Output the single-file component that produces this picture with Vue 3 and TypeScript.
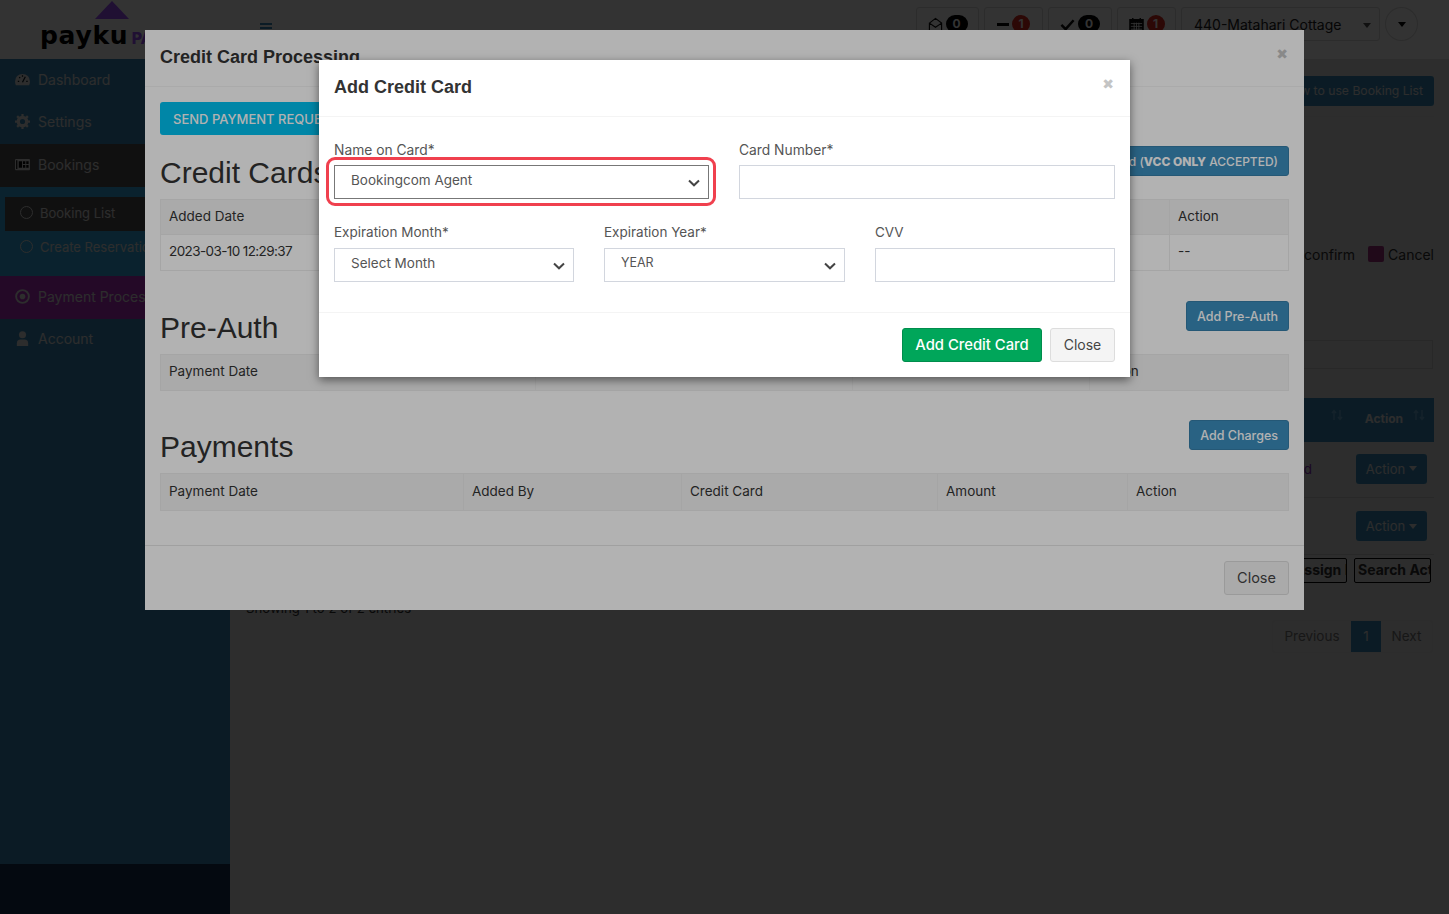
<script setup lang="ts">
const navItems = [
  { label: 'Dashboard', icon: 'dash', cls: '' },
  { label: 'Settings', icon: 'gear', cls: '' },
  { label: 'Bookings', icon: 'card', cls: 'dark' },
]
const months = ['Select Month']
</script>

<template>
  <div class="page">
    <aside class="sidebar">
      <div class="logo">
        <span class="tri"></span>
        <div class="logo-text"><b>payku</b><em>PAY</em></div>
      </div>
      <nav class="nav">
        <a v-for="n in navItems" :key="n.label" class="nav-item" :class="n.cls">
          <svg v-if="n.icon === 'dash'" class="ni" viewBox="0 0 16 16"><path d="M8 2a8 8 0 0 0-8 8c0 1.500.4 2.700 1 4h14c.6-1.300 1-2.500 1-4a8 8 0 0 0-8-8z" fill="currentColor"/><path d="M8 11 11 5M3 10h1.500M12 10h1.500M4.500 5.500l1 1M8 3.500v1.500" stroke="#0c1c26" stroke-width="1.300"/></svg>
          <svg v-else-if="n.icon === 'gear'" class="ni" viewBox="0 0 16 16"><circle cx="8" cy="8" r="4.500" fill="none" stroke="currentColor" stroke-width="3.500"/><path d="M8 0v3M8 13v3M0 8h3M13 8h3M2.300 2.300l2 2M11.700 11.700l2 2M2.300 13.700l2-2M11.700 4.300l2-2" stroke="currentColor" stroke-width="2.400"/></svg>
          <svg v-else class="ni" viewBox="0 0 16 12"><rect width="16" height="12" rx="1" fill="currentColor"/><path d="M1.200 1.500h1.300v9.300H1.200zM4 2.500h3.500v7H4zM8.500 2.500h2.500v3H8.500zM12 2.500h2.500v3H12zM8.500 6.500h2.500v3H8.500zM12 6.500h2.500v3H12z" fill="#111"/></svg>
          <span>{{ n.label }}</span>
        </a>
        <div class="sub">
          <a class="sub-item on"><i></i>Booking List</a>
          <a class="sub-item"><i></i>Create Reservation</a>
        </div>
        <a class="nav-item purple">
          <svg class="ni" viewBox="0 0 16 16"><circle cx="8" cy="8" r="6.800" fill="none" stroke="currentColor" stroke-width="2"/><circle cx="8" cy="8" r="3" fill="currentColor"/></svg>
          <span>Payment Processing</span>
        </a>
        <a class="nav-item">
          <svg class="ni" viewBox="0 0 16 16"><circle cx="8" cy="4" r="3.800" fill="currentColor"/><path d="M2 16v-3a4 4 0 0 1 4-4h4a4 4 0 0 1 4 4v3z" fill="currentColor"/></svg>
          <span>Account</span>
        </a>
      </nav>
      <div class="side-foot"></div>
    </aside>

    <div class="main">
      <header class="topbar">
        <span class="burger"><i></i><i></i><i></i></span>
        <div class="top-right">
          <span class="pill w63">
            <svg class="pi" viewBox="0 0 16 16"><path d="M1.500 6.500 8 1.500l6.500 5v8h-13zM1.500 6.500 8 11l6.500-4.500" fill="none" stroke="#0b0b0b" stroke-width="1.200"/></svg>
            <b class="cnt">0</b>
          </span>
          <span class="pill w59">
            <span class="minus"></span>
            <b class="cnt red">1</b>
          </span>
          <span class="pill w64">
            <svg class="pi" viewBox="0 0 16 16"><path d="M1.500 8.500 6 13l8.500-9.500" fill="none" stroke="#0b0b0b" stroke-width="2.600"/></svg>
            <b class="cnt">0</b>
          </span>
          <span class="pill w59">
            <svg class="pi" viewBox="0 0 16 16"><path d="M1 3h14v12H1zM4 1v3M12 1v3" fill="#0b0b0b" stroke="#0b0b0b" stroke-width="1.500"/><path d="M2 7h12M2 10h12M2 13h12M5.500 6v8M8 6v8M10.500 6v8" stroke="#fff" stroke-width=".9"/></svg>
            <b class="cnt red">1</b>
          </span>
          <span class="hotel">440-Matahari Cottage<i class="caret"></i></span>
          <span class="round"><i class="caret dark"></i></span>
        </div>
      </header>

      <section class="content">
        <div class="how-row"><a class="btn-bg">How to use Booking List</a></div>
        <div class="legend">
          <span>confirm</span><i class="sq"></i><span>Cancel</span>
        </div>
        <div class="search"></div>
        <div class="thead">
          <svg class="sort s1" viewBox="0 0 12 12"><path d="M3 11V2M1 4l2-2.500L5 4M9 1v9M7 8l2 2.500L11 8" fill="none" stroke="#6db0d8" stroke-width="1.300"/></svg>
          <b>Action</b>
          <svg class="sort" viewBox="0 0 12 12"><path d="M3 11V2M1 4l2-2.500L5 4M9 1v9M7 8l2 2.500L11 8" fill="none" stroke="#6db0d8" stroke-width="1.300"/></svg>
        </div>
        <div class="trow first"><span class="purple-t">Confirmed</span><a class="act">Action<i class="caret"></i></a></div>
        <div class="trow"><span></span><a class="act">Action<i class="caret"></i></a></div>
        <div class="btn-row"><span class="ob assign">Assign Room</span><span class="ob">Search Activity</span></div>
        <div class="show">Showing 1 to 2 of 2 entries</div>
        <div class="pager"><span class="prev">Previous</span><b>1</b><span class="next">Next</span></div>
      </section>
    </div>

    <div class="backdrop first"></div>

    <div class="modal outer">
      <div class="m-head">
        <h4>Credit Card Processing</h4>
        <span class="x">✖</span>
      </div>
      <div class="m-body">
        <div class="first-row">
          <a class="b-info">SEND PAYMENT REQUEST</a>
        </div>
        <div class="sec-row cards-title">
          <h2>Credit Cards</h2>
          <a class="b-blue vcc">Add Credit Card (<b>VCC ONLY</b> ACCEPTED)</a>
        </div>
        <table class="t t-cards">
          <thead>
            <tr><th class="c1">Added Date</th><th>Card</th><th class="c7">Action</th></tr>
          </thead>
          <tbody>
            <tr><td class="stamp">2023-03-10 12:29:37</td><td></td><td>--</td></tr>
          </tbody>
        </table>
        <div class="sec-row pre-title">
          <h2>Pre-Auth</h2>
          <a class="b-blue">Add Pre-Auth</a>
        </div>
        <table class="t">
          <thead>
            <tr><th class="p1">Payment Date</th><th class="p2"></th><th class="p3"></th><th>Action</th></tr>
          </thead>
        </table>
        <div class="sec-row pay-title">
          <h2>Payments</h2>
          <a class="b-blue">Add Charges</a>
        </div>
        <table class="t t-pay">
          <thead>
            <tr><th class="q1">Payment Date</th><th class="q2">Added By</th><th class="q3">Credit Card</th><th class="q4">Amount</th><th>Action</th></tr>
          </thead>
        </table>
      </div>
      <div class="m-foot"><a class="b-def big">Close</a></div>
    </div>

    <div class="backdrop second"></div>

    <div class="modal inner">
      <div class="m-head in">
        <h4>Add Credit Card</h4>
        <span class="x">✖</span>
      </div>
      <div class="in-body">
        <div class="grid two">
          <div class="field">
            <label>Name on Card*</label>
            <div class="ring">
              <div class="ctl sel focus">Bookingcom Agent
                <svg class="chev" viewBox="0 0 12 8"><path d="M1 1.500 6 6.300l5-4.800" fill="none" stroke="#444" stroke-width="2"/></svg>
              </div>
            </div>
          </div>
          <div class="field">
            <label>Card Number*</label>
            <div class="ctl"></div>
          </div>
        </div>
        <div class="grid three">
          <div class="field">
            <label>Expiration Month*</label>
            <div class="ctl sel">{{ months[0] }}
              <svg class="chev" viewBox="0 0 12 8"><path d="M1 1.500 6 6.300l5-4.800" fill="none" stroke="#444" stroke-width="2"/></svg>
            </div>
          </div>
          <div class="field">
            <label>Expiration Year*</label>
            <div class="ctl sel small">YEAR
              <svg class="chev" viewBox="0 0 12 8"><path d="M1 1.500 6 6.300l5-4.800" fill="none" stroke="#444" stroke-width="2"/></svg>
            </div>
          </div>
          <div class="field">
            <label>CVV</label>
            <div class="ctl"></div>
          </div>
        </div>
      </div>
      <div class="in-foot">
        <a class="b-green">Add Credit Card</a>
        <a class="b-def">Close</a>
      </div>
    </div>
  </div>
</template>

<style>
html, body { margin: 0; padding: 0; background: #e1e1e1; }
</style>

<style scoped>
* { box-sizing: border-box; }
.page {
  position: relative;
  display: flex;
  width: 1449px;
  height: 914px;
  overflow: hidden;
  background: #e1e1e1;
  font-family: "Inter", "Liberation Sans", sans-serif;
  font-size: 13.500px;
  color: #333;
}
.sidebar { width: 230px; flex: none; display: flex; flex-direction: column; background: #3c8dbc; }
.logo { height: 59px; background: #fff; position: relative; padding: 1px 0 0 95px; }
.tri { display: block; width: 0; height: 0; border-left: 17px solid transparent; border-right: 17px solid transparent; border-bottom: 18px solid #a050ff; }
.logo-text { position: absolute; left: 40px; top: 20px; display: flex; align-items: baseline; color: #000; font-family: "DejaVu Sans", sans-serif; white-space: nowrap; }
.logo-text b { font-size: 25px; letter-spacing: .7px; line-height: 32px; }
.logo-text em { font-style: normal; font-weight: 700; font-size: 15px; color: #a050ff; margin-left: 3px; }
.nav { flex: 1; }
.nav-item { display: flex; align-items: center; height: 42.500px; padding: 0 0 2px 15px; gap: 8px; color: #e1e1e1; font-size: 14px; white-space: nowrap; }
.nav-item.dark { background: #555; }
.nav-item.purple { background: #b532c8; }
.ni { width: 15px; height: 15px; flex: none; }
.sub { background: #37b0e6; padding: 10px 5px 11.500px; }
.sub-item { display: flex; align-items: center; height: 34px; padding: 0 0 2px 15px; gap: 7px; color: #e1e1e1; font-size: 13px; white-space: nowrap; }
.sub-item.on { background: #555; }
.sub-item i { width: 13px; height: 13px; border-radius: 50%; border: 1.500px solid #e1e1e1; }
.side-foot { height: 50px; background: #193250; }

.main { flex: 1; display: flex; flex-direction: column; min-width: 0; }
.topbar { height: 59px; background: #fff; display: flex; justify-content: space-between; padding: 7px 31px 0 30px; }
.burger { display: flex; flex-direction: column; gap: 2px; padding-top: 16px; }
.burger i { display: block; width: 12px; height: 2px; background: #3c8dbc; }
.top-right { display: flex; gap: 5px; height: 34px; }
.pill { display: flex; align-items: center; justify-content: center; gap: 3px; height: 34px; border: 1px solid #ddd; border-radius: 3px; }
.w63 { width: 63px; }
.w59 { width: 59px; }
.w64 { width: 64px; }
.pi { width: 15px; height: 15px; }
.minus { width: 12px; height: 3px; background: #000; }
.cnt { width: 22px; height: 18px; border-radius: 10px; background: #000; color: #fff; font-size: 12px; text-align: center; line-height: 18px; }
.cnt.red { background: #dd2a20; width: 18px; }
.hotel { display: flex; align-items: center; width: 199px; height: 34px; padding: 0 12px; border: 1px solid #ddd; border-radius: 3px; font-size: 14px; color: #222; position: relative; white-space: nowrap; }
.caret { display: inline-block; width: 0; height: 0; border-left: 4px solid transparent; border-right: 4px solid transparent; border-top: 5px solid #e1e1e1; margin-left: 4px; }
.hotel .caret { position: absolute; right: 8px; top: 15px; border-top-color: #555; }
.round { width: 33px; height: 34px; border-radius: 50%; border: 1px solid #ddd; display: flex; align-items: center; justify-content: center; }
.caret.dark { border-top-color: #000; margin: 0; }

.content { flex: 1; padding: 17px 15px 0 16px; display: flex; flex-direction: column; align-items: stretch; color: #333; }
.how-row { display: flex; justify-content: flex-end; padding-bottom: 10px; border-bottom: 1px solid #ddd; }
.btn-bg { height: 30px; width: 300px; background: #3c8dbc; color: #e1e1e1; border-radius: 3px; display: flex; align-items: center; justify-content: flex-end; padding: 0 11px 1px; font-size: 12.200px; }
.legend { display: flex; justify-content: flex-end; align-items: center; gap: 4px; margin-top: 127px; height: 20px; font-size: 14px; }
.legend span:first-child { margin-right: 9px; }
.sq { width: 16px; height: 16px; border-radius: 2px; background: #a0307f; }
.search { height: 29px; border: 1px solid #ccc; margin: 76px 1px 0 0; }
.thead { position: relative; height: 44px; margin-top: 29px; background: #3c8dbc; color: #e1e1e1; display: flex; justify-content: flex-end; align-items: center; padding: 0 31px 3px 0; font-size: 12px; }
.sort { position: absolute; right: 9px; top: 11px; width: 12px; height: 12px; }
.sort.s1 { right: 91px; }
.trow { height: 57px; display: flex; justify-content: flex-end; align-items: center; gap: 44px; border-bottom: 1px solid #ccc; padding-right: 7px; }
.trow.first { height: 56px; padding-bottom: 2px; }
.act { display: flex; align-items: center; justify-content: center; width: 71px; height: 30px; background: #3c8dbc; border-radius: 3px; color: #e1e1e1; font-size: 13px; }
.purple-t { color: #8a2fb8; }
.btn-row { display: flex; justify-content: flex-end; gap: 7px; padding: 3px 3px 0 0; }
.ob { width: 77px; height: 25px; border: 1px solid #000; border-radius: 2px; font-weight: 700; font-size: 14px; overflow: hidden; white-space: nowrap; padding: 2px 3px; }
.ob.assign { padding-left: 23px; }
.show { margin-top: 17px; font-size: 13.200px; }
.pager { align-self: flex-end; display: flex; height: 33px; margin: 4px 1px 0 0; border: 1px solid #ddd; border-radius: 3px; }
.pager span { line-height: 31px; color: #777; text-align: center; }
.prev { width: 78px; }
.next { width: 51px; }
.pager b { width: 30px; background: #3c8dbc; color: #e1e1e1; text-align: center; line-height: 31px; font-weight: 400; }

.backdrop { position: absolute; inset: 0; background: #000; }
.backdrop.first { opacity: .714; }
.backdrop.second { opacity: .3; }

.modal { position: absolute; background: #fff; overflow: hidden; display: flex; flex-direction: column; }
.modal.outer { left: 145px; top: 30px; width: 1159px; height: 580px; }
.modal.inner { left: 319px; top: 60px; width: 811px; height: 317px; box-shadow: 0 3px 9px rgba(0,0,0,.5); }

.m-head { height: 57px; display: flex; justify-content: space-between; align-items: center; padding: 0 15px; border-bottom: 1px solid #f4f4f4; }
.m-head h4 { margin: 0; font: 700 18px/1.100 "Liberation Sans", sans-serif; color: #333; }
.x { color: #c4c4c4; font-size: 14px; line-height: 14px; font-family: "DejaVu Sans", sans-serif; margin: -8px 1px 0 0; }

.m-body { flex: 1; padding: 15px 15px 0; }
.first-row { height: 33px; }
.b-info { width: 220px; height: 33px; background: #00c0ef; color: #fff; border-radius: 3px; display: flex; align-items: center; padding: 0 13px; font-size: 13px; font-weight: 500; white-space: nowrap; }
h2 { margin: 10px 0 0; font: 400 30px/33px "Liberation Sans", sans-serif; color: #333; }
.sec-row { display: flex; justify-content: space-between; align-items: flex-start; height: 53px; }
.cards-title { margin-top: 11px; }
.pre-title { margin-top: 30px; }
.pay-title { margin-top: 29px; }
.b-blue { height: 30px; background: #3c8dbc; color: #fff; border: 1px solid #367fa9; border-radius: 3px; display: flex; align-items: center; padding: 0 10px; font-size: 12.500px; white-space: pre; font-weight: 500; }
.b-blue.vcc { font-size: 12px; }
.b-blue b { font-weight: 800; }
.t { width: 100%; border-collapse: collapse; table-layout: fixed; font-size: 13.500px; color: #333; }
.t th, .t td { border: 1px solid #ececec; font-weight: 400; text-align: left; padding: 0 8px 3px; height: 36px; }
.t th { background: #f4f4f4; }
.t-cards th { height: 35px; }
.t-pay th { height: 37px; }
.stamp { letter-spacing: -.6px; }
.c1 { width: 540px; }
.c7 { width: 119px; }
.p1 { width: 375px; }
.p2 { width: 317px; }
.p3 { width: 237px; }
.q1 { width: 303px; }
.q2 { width: 218px; }
.q3 { width: 256px; }
.q4 { width: 190px; }
.m-foot { height: 65px; border-top: 1px solid #e5e5e5; display: flex; justify-content: flex-end; align-items: center; padding: 0 15px; }
.b-def { height: 34px; width: 65px; justify-content: center; background: #f4f4f4; border: 1px solid #ddd; border-radius: 3px; display: flex; align-items: center; color: #444; font-size: 14px; padding-bottom: 1px; }
.b-def.big { font-size: 14.500px; }

.in-body { flex: 1; padding: 25px 15px 0; }
.grid { display: grid; }
.two { grid-template-columns: 375px 376px; column-gap: 30px; }
.three { grid-template-columns: 240px 241px 240px; column-gap: 30px; margin-top: 25px; }
.field label { display: block; font-size: 13.500px; line-height: 16px; margin-bottom: 7px; color: #555; }
.two .field label { font-size: 13.800px; }
.three .field label { margin-bottom: 8px; }
.ctl { position: relative; height: 34px; border: 1px solid #d2d6de; padding: 0 16px; line-height: 28px; color: #555; font-size: 13.500px; }
.ctl.small { font-size: 12.500px; }
.ctl.focus { border-color: #777; }
.ring { position: relative; }
.ring::after { content: ""; position: absolute; inset: -8px -7px -7px -8px; border: 3px solid #f0404e; border-radius: 9px; pointer-events: none; }
.chev { position: absolute; right: 8px; top: 13px; width: 12px; height: 8px; }
.in-foot { height: 65px; border-top: 1px solid #f4f4f4; display: flex; justify-content: flex-end; align-items: center; gap: 8px; padding: 0 15px; }
.b-green { height: 34px; width: 140px; justify-content: center; background: #00a65a; border: 1px solid #008d4c; border-radius: 3px; color: #fff; display: flex; align-items: center; font-size: 14.800px; font-weight: 500; }
</style>
